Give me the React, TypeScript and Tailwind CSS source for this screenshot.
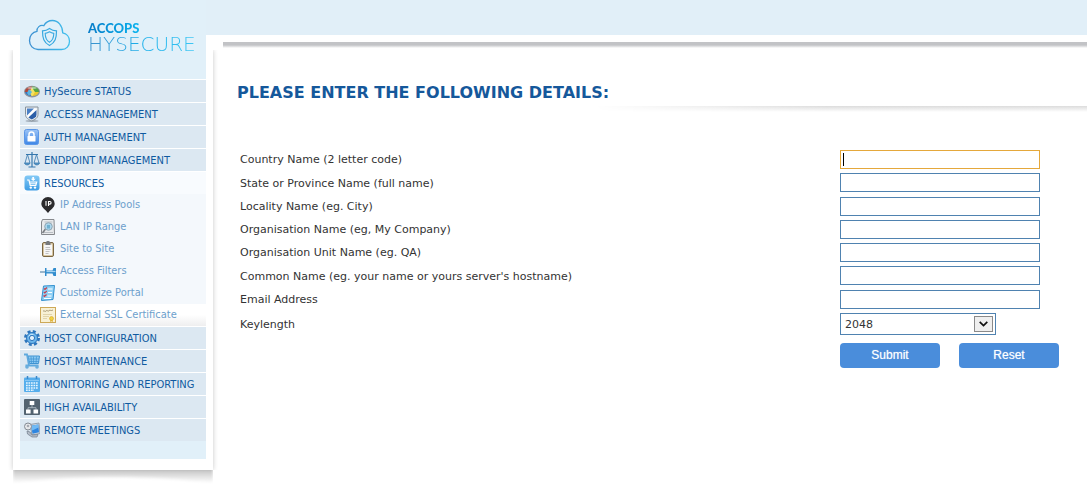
import React from "react";

type NavItem = {
  label: string;
  icon: React.ReactNode;
  children?: NavItem[];
};

type Field = {
  name: string;
  label: string;
};

const iconClass = "w-4 h-4 shrink-0";

const StatusIcon = () => (
  <svg viewBox="0 0 16 16" className={iconClass}>
    <defs>
      <clipPath id="status-oval">
        <ellipse cx="8" cy="8.300" rx="7" ry="4.800" />
      </clipPath>
    </defs>
    <ellipse cx="8" cy="8.600" rx="8" ry="5.900" fill="#8f949c" />
    <g clipPath="url(#status-oval)">
      <path d="M0 0h8v9H0z" fill="#b0483a" />
      <path d="M8 0h8v9H8z" fill="#55a343" />
      <path d="M0 9h8v7H0z" fill="#3577c4" />
      <path d="M8 9h8v7H8z" fill="#ecc92c" />
      <path d="M8 4.500l3 4.500-3 5-3-5z" fill="#f3e163" />
      <path d="M5 6l3 3-3 4-2-3z" fill="#5fb4dd" />
      <ellipse cx="8" cy="4.800" rx="5" ry="1.400" fill="#fff" opacity=".45" />
    </g>
  </svg>
);

const ShieldIcon = () => (
  <svg viewBox="0 0 16 16" className={iconClass}>
    <ellipse cx="8" cy="15" rx="6.500" ry="1" fill="#7e8b96" opacity=".6" />
    <path
      d="M1.500 1h12.500v7.500c0 3.500-3 5-6.200 6.500-3.300-1.500-6.300-3-6.300-6.500z"
      fill="#e8edf1"
      stroke="#87929c"
    />
    <path d="M3 2.500h9.500v6c0 2.500-2.200 3.800-4.700 5C5.300 12.300 3 11 3 8.500z" fill="#fff" />
    <path d="M3 2.500h7L3 9.500z" fill="#4a7fc4" />
    <path d="M12.500 4v4.500c0 2.500-2.200 3.800-4.700 5-1.300-.6-2.500-1.200-3.400-2z" fill="#2c5fa8" />
  </svg>
);

const LockIcon = () => (
  <svg viewBox="0 0 16 16" className={iconClass}>
    <defs>
      <linearGradient id="lock-bg" x1="0" y1="0" x2="0" y2="1">
        <stop offset="0" stopColor="#9cc4f6" />
        <stop offset="1" stopColor="#3d86e6" />
      </linearGradient>
    </defs>
    <rect x=".5" y=".5" width="14" height="15" rx="2" fill="url(#lock-bg)" stroke="#5b97e8" />
    <path d="M5 7V5.500a2.500 2.500 0 0 1 5 0V7" fill="none" stroke="#fff" strokeWidth="1.500" />
    <rect x="3.500" y="7" width="8" height="5.500" rx=".5" fill="#fff" />
  </svg>
);

const ScalesIcon = () => (
  <svg viewBox="0 0 16 16" className={iconClass} fill="none" stroke="#3577ad">
    <path d="M8 0v15M4.500 15h7M2 2.500h12" strokeWidth="1.200" />
    <path d="M3.500 2.500L1 11M3.500 2.500L6 11M12.500 2.500L10 11M12.500 2.500L15 11" strokeWidth=".8" />
    <path d="M.5 11h5.500c-.5 2.500-5 2.500-5.500 0zM10 11h5.500c-.5 2.500-5 2.500-5.500 0z" fill="#5b9bcb" strokeWidth=".8" />
  </svg>
);

const ResourcesIcon = () => (
  <svg viewBox="0 0 16 16" className={iconClass}>
    <defs>
      <linearGradient id="resources-bg" x1="0" y1="0" x2="0" y2="1">
        <stop offset="0" stopColor="#82c9f6" />
        <stop offset="1" stopColor="#3d9ce4" />
      </linearGradient>
    </defs>
    <rect x=".5" y=".5" width="15" height="15" rx="3" fill="url(#resources-bg)" />
    <path d="M3 5h2l1.200 5.500h5.600l.9-3.500H5.500" fill="none" stroke="#fff" strokeWidth="1.200" />
    <path d="M6 8.800h6" stroke="#fff" />
    <path d="M8.300 2h1.800v1.700h1.600L9.200 6 6.700 3.700h1.600z" fill="#fff" />
    <circle cx="6.800" cy="12.600" r="1.200" fill="#fff" />
    <circle cx="11" cy="12.600" r="1.200" fill="#fff" />
  </svg>
);

const PinIcon = () => (
  <svg viewBox="0 0 16 16" className={iconClass}>
    <path d="M8 0a6.700 6.700 0 0 0-6.700 6.700C1.300 10.500 6 13 8 16c2-3 6.700-5.500 6.700-9.300A6.700 6.700 0 0 0 8 0z" fill="#2b2b2d" />
    <path d="M6 4v4.800M8.500 9V4.500h1.300a1.300 1.300 0 0 1 0 2.600H8.500" fill="none" stroke="#fff" strokeWidth="1.100" />
  </svg>
);

const RangeIcon = () => (
  <svg viewBox="0 0 16 16" className={iconClass}>
    <path d="M2.500.5H14l.5 15h-13V3z" fill="#e8eaec" stroke="#86898d" />
    <path d="M4.500 3h8M4 13.500h9" stroke="#b9bec3" />
    <path d="M5.500 10l-3 4" stroke="#777b80" strokeWidth="1.500" />
    <circle cx="8.500" cy="7.500" r="3.800" fill="#abd6ec" stroke="#8fa5b2" />
    <path d="M7 6h3v3.500H7z" fill="#6fb0d0" />
  </svg>
);

const ClipboardIcon = () => (
  <svg viewBox="0 0 16 16" className={iconClass}>
    <rect x="2.500" y="1.500" width="11" height="14" rx="1.500" fill="#d7c6a2" stroke="#7b6744" />
    <path d="M4 3.500h8v10.500H4z" fill="#f6f6f6" />
    <path d="M5.500 1.500L7 0h2l1.500 1.500V4h-5z" fill="#76797c" />
    <path d="M5.500 6.500h4.500M5.500 8.500h5M5.500 10.500h4M5.500 12.500h3" stroke="#b5b5b5" strokeWidth=".8" />
  </svg>
);

const PushPinIcon = () => (
  <svg viewBox="0 0 16 16" className={iconClass}>
    <path d="M0 9h6" stroke="#5e8bab" strokeWidth="1.200" />
    <path d="M5 5h1.500v2.500h6l1-2.500H16v8h-2.500l-1-2.500h-6V13H5z" fill="#328dce" />
    <path d="M6.500 8.500h9" stroke="#a5d5f2" strokeWidth="1.200" />
  </svg>
);

const ChecklistIcon = () => (
  <svg viewBox="0 0 16 16" className={iconClass}>
    <path d="M3.500 1l11-.5-1.500 14-11.500 1z" fill="#8fd0f5" stroke="#318fce" />
    <path d="M8 4h4.500M8 7.500h4M7.500 11h4M4 13.500h7" stroke="#fff" strokeWidth="1.200" />
    <path d="M4 3.500l1 1 2-2M3.800 7l1 1 2-2M3.500 10.500l1 1 2-2" fill="none" stroke="#c34251" strokeWidth="1.200" />
  </svg>
);

const CertificateIcon = () => (
  <svg viewBox="0 0 16 16" className={iconClass}>
    <rect x=".5" y=".5" width="15" height="15" fill="#f8f1d5" stroke="#cda958" />
    <path d="M3 4.500c1-2 2 1 3-.5s2 1 3-.3 2 .7 4-.7" fill="none" stroke="#93825b" strokeWidth=".8" />
    <path d="M3 7.500h9M3 9.500h6M3 11.500h4" stroke="#dbcda0" strokeWidth=".8" />
    <path d="M10.500 12l-.5 3 1.500-.8L13 15l-.5-3z" fill="#dfb23a" />
    <circle cx="11.500" cy="11.500" r="2" fill="#f0d23f" stroke="#d9a52f" strokeWidth=".6" />
  </svg>
);

const GearIcon = () => (
  <svg viewBox="0 0 16 16" className={iconClass}>
    <circle cx="8" cy="8" r="6.500" fill="none" stroke="#2d76bd" strokeWidth="3" strokeDasharray="2.900 2.200" />
    <circle cx="8" cy="8" r="5.500" fill="#6bb5ea" stroke="#2d76bd" />
    <circle cx="8" cy="8" r="2.600" fill="#e3f0fa" stroke="#2d76bd" />
    <path d="M4.500 6.500a4 4 0 0 1 5-2" fill="none" stroke="#c6e5fa" />
  </svg>
);

const CartIcon = () => (
  <svg viewBox="0 0 16 16" className={iconClass}>
    <path d="M4 3h11.500l-1 7.500h-9z" fill="#8bc9f2" stroke="#3f93d2" />
    <path d="M7 3.500l.5 7M9.500 3.500v7M12.500 3.500l-.5 7M5 6h10M5 8.500h10" stroke="#3f93d2" strokeWidth=".7" />
    <path d="M0 1.500h3l2 11h-3.500M5 12.500h9.500" fill="none" stroke="#5ea9de" strokeWidth="1.800" />
    <circle cx="3" cy="14" r="1.800" fill="#6caedd" />
    <circle cx="13" cy="14" r="1.800" fill="#6caedd" />
  </svg>
);

const CalendarIcon = () => (
  <svg viewBox="0 0 16 16" className={iconClass}>
    <rect x="0" y="1.500" width="16" height="14.500" rx="1" fill="#56aeec" />
    <path d="M3.500 0v3M12.500 0v3" stroke="#3988cb" strokeWidth="1.500" />
    <path d="M1 4.500h14" stroke="#86c6f4" />
    <path d="M2 7h12.500M2 9.500h12.500M2 12h12.500M2 14.200h8" stroke="#e8f6ff" strokeWidth="1.500" strokeDasharray="1.700 .8" />
  </svg>
);

const ClusterIcon = () => (
  <svg viewBox="0 0 16 16" className={iconClass}>
    <rect width="16" height="16" rx="1" fill="#536370" />
    <path d="M8 6v3M4 11V8.700h8V11" fill="none" stroke="#a3b0b9" />
    <path d="M5.700 2h4.600v4H5.700zM2 10.500h4.600v4H2zM9.500 10.500h4.600v4H9.500z" fill="#fff" />
  </svg>
);

const MeetingIcon = () => (
  <svg viewBox="0 0 16 16" className={iconClass}>
    <path d="M6 2.500l9-1.500 1 10.500-8 1.500z" fill="#cfd7df" stroke="#8190a1" strokeWidth=".8" />
    <path d="M7 3.800l7.300-1.400.7 7.800-6.500 1.500z" fill="#2f86e0" />
    <path d="M7 3.800l7.300-1.400.2 3-6.300 3z" fill="#71baf4" />
    <circle cx="4" cy="4.500" r="3.500" fill="#e6e8eb" stroke="#838a94" />
    <circle cx="4" cy="4" r="1.300" fill="#a5a9b2" />
    <path d="M3 9l3 1 2 3 6-.5-1 2.500H8L3.500 12z" fill="#b5bdc8" stroke="#717c8c" strokeWidth=".7" />
  </svg>
);

const navItems: NavItem[] = [
  { label: "HySecure STATUS", icon: <StatusIcon /> },
  { label: "ACCESS MANAGEMENT", icon: <ShieldIcon /> },
  { label: "AUTH MANAGEMENT", icon: <LockIcon /> },
  { label: "ENDPOINT MANAGEMENT", icon: <ScalesIcon /> },
  {
    label: "RESOURCES",
    icon: <ResourcesIcon />,
    children: [
      { label: "IP Address Pools", icon: <PinIcon /> },
      { label: "LAN IP Range", icon: <RangeIcon /> },
      { label: "Site to Site", icon: <ClipboardIcon /> },
      { label: "Access Filters", icon: <PushPinIcon /> },
      { label: "Customize Portal", icon: <ChecklistIcon /> },
      { label: "External SSL Certificate", icon: <CertificateIcon /> },
    ],
  },
  { label: "HOST CONFIGURATION", icon: <GearIcon /> },
  { label: "HOST MAINTENANCE", icon: <CartIcon /> },
  { label: "MONITORING AND REPORTING", icon: <CalendarIcon /> },
  { label: "HIGH AVAILABILITY", icon: <ClusterIcon /> },
  { label: "REMOTE MEETINGS", icon: <MeetingIcon /> },
];

const fields: Field[] = [
  { name: "country", label: "Country Name (2 letter code)" },
  { name: "state", label: "State or Province Name (full name)" },
  { name: "locality", label: "Locality Name (eg. City)" },
  { name: "organisation", label: "Organisation Name (eg, My Company)" },
  { name: "unit", label: "Organisation Unit Name (eg. QA)" },
  { name: "commonName", label: "Common Name (eg. your name or yours server's hostname)" },
  { name: "email", label: "Email Address" },
];

const rowClass = "grid grid-cols-[600fr_247fr] items-center";

function Logo() {
  return (
    <div className="flex h-[79px] items-start bg-[#e1f0f9] pl-2 pt-[19px]">
      <svg viewBox="0 0 44 34" className="h-[34px] w-11 shrink-0" fill="none">
        <defs>
          <linearGradient id="cloud" x1="0" y1="0" x2="1" y2="0">
            <stop offset="0" stopColor="#3c8fd0" />
            <stop offset="1" stopColor="#3fc0ee" />
          </linearGradient>
        </defs>
        <path
          d="M10 30.500h23.500c5 0 8-3.700 8-8.300 0-4.500-3-7.700-6.800-8.400C34.500 6.500 30 1.500 24.500 1.500c-4 0-7 2-8.700 5.200-3.800-1.200-7.200 1.800-6.800 5.600C4.500 13 1.500 16.800 1.500 21.500c0 5 3.500 9 8.500 9z"
          stroke="url(#cloud)"
          strokeWidth="1.300"
        />
        <path d="M21.500 9.500c2 1.500 4.300 2.300 7 2.400 0 7-1.200 11.600-7 14.600-5.800-3-7-7.600-7-14.600 2.700-.1 5-.9 7-2.400z" stroke="#38a9e0" strokeWidth="1.200" />
        <path d="M21.500 12.800c1.400.9 2.800 1.400 4.300 1.600-.1 4.400-1.100 7-4.300 8.900-3.200-1.900-4.200-4.500-4.300-8.900 1.500-.2 2.900-.7 4.300-1.600z" stroke="#38a9e0" strokeWidth="1.100" />
      </svg>
      <div className="flex flex-col items-start pl-4 pt-0.5">
        <span className="bg-gradient-to-r from-[#087cc8] to-[#0bb3ee] bg-clip-text font-['Lato'] text-[13px] font-black leading-[14px] text-transparent">
          ACCOPS
        </span>
        <span className="bg-gradient-to-r from-[#3a92cd] via-[#16aeea] to-[#3fc8f4] bg-clip-text font-['DejaVu_Sans_Light','DejaVu_Sans',sans-serif] text-[20px] font-extralight leading-[18px] text-transparent">
          HYSECURE
        </span>
      </div>
    </div>
  );
}

function Sidebar() {
  return (
    <aside className="relative ml-[13px] w-[200px] shrink-0 font-['DejaVu_Sans_Condensed','DejaVu_Sans',sans-serif] text-[11px]">
      {/* paper frame behind the menu, shadow on its sides only */}
      <div className="absolute inset-x-0 bottom-4 top-[50px] bg-white shadow-[0_0_5px_rgba(0,0,0,0.22)] [clip-path:inset(0_-6px)]" />
      <div className="relative px-[7px]">
        <Logo />
        <nav className="bg-[#e1f0f9] pb-[18px]">
          <ul>
            {navItems.map((item) => (
              <li key={item.label}>
                <a
                  href="#"
                  className={`flex h-[23px] items-center gap-1 border-t border-white pl-1 text-[#0f5aa0] ${
                    item.children ? "bg-[#f8fbfe]" : "bg-[#dce8f2]"
                  }`}
                >
                  {item.icon}
                  <span className="whitespace-nowrap pt-0.5">{item.label}</span>
                </a>
                {item.children && (
                  <ul className="bg-[#f4f8fc]">
                    {item.children.map((child) => (
                      <li key={child.label} className="last:bg-gradient-to-b last:from-white last:from-50% last:to-[#eeeeef]">
                        <a href="#" className="flex h-[22px] items-center gap-1 pb-px pl-5 text-[#6d9fcc]">
                          {child.icon}
                          <span className="whitespace-nowrap pt-0.5">{child.label}</span>
                        </a>
                      </li>
                    ))}
                  </ul>
                )}
              </li>
            ))}
          </ul>
        </nav>
        <div className="h-[11px]" />
      </div>
      <svg viewBox="0 0 200 16" preserveAspectRatio="none" className="relative block h-4 w-full">
        <defs>
          <linearGradient id="curl" x1="0" y1="0" x2="0" y2="1">
            <stop offset="0" stopColor="#989898" />
            <stop offset=".4" stopColor="#cfcfcf" />
            <stop offset="1" stopColor="#fff" />
          </linearGradient>
          <filter id="curl-blur" x="-5%" y="-50%" width="110%" height="200%">
            <feGaussianBlur stdDeviation="1.500" />
          </filter>
        </defs>
        <path d="M0-5h200v18C170 9 135 7 100 7S30 9 0 13z" fill="url(#curl)" filter="url(#curl-blur)" />
      </svg>
    </aside>
  );
}

function CertificateForm() {
  return (
    <form className="pl-[17px] pt-[38px] text-[11px] text-[#333]" onSubmit={(e) => e.preventDefault()}>
      <div className="flex h-[185px] flex-col justify-between">
        {fields.map((field, index) => (
          <div key={field.name} className={rowClass}>
            <label htmlFor={field.name} className="pt-0.5">
              {field.label}
            </label>
            <input
              id={field.name}
              name={field.name}
              type="text"
              autoFocus={index === 0}
              className="h-[19px] w-[200px] border border-[#4f82b0] bg-white px-[3px] caret-transparent outline-none focus:border-[#e5a83b] focus:bg-[linear-gradient(#000,#000)] focus:bg-[length:1px_13px] focus:bg-[position:2px_2px] focus:bg-no-repeat"
            />
          </div>
        ))}
        <div className={rowClass}>
          <label htmlFor="keylength" className="pt-0.5">
            Keylength
          </label>
          <div className="relative w-[156px]">
            <select
              id="keylength"
              name="keylength"
              defaultValue="2048"
              className="block h-[22px] w-full appearance-none border border-[#4f82b0] bg-white px-1 pt-0.5 outline-none"
            >
              <option>1024</option>
              <option>2048</option>
              <option>4096</option>
            </select>
            <span className="pointer-events-none absolute right-[3px] top-[3px] flex h-4 w-[19px] items-center justify-center border border-[#8a8a8a] bg-[#efefef]">
              <svg viewBox="0 0 9 6" className="h-1.5 w-[9px]" fill="none" stroke="#111" strokeWidth="1.700">
                <path d="M.7.800l3.800 3.700L8.300.800" />
              </svg>
            </span>
          </div>
        </div>
      </div>
      <div className={`${rowClass} pt-2`}>
        <div className="col-start-2 flex gap-[19px] font-['Liberation_Sans',Arial,sans-serif] text-xs text-white">
          <button
            type="submit"
            className="h-[25px] w-[100px] shrink-0 rounded bg-[#4a8ddb] pb-px [text-shadow:0_0_1px_rgba(255,255,255,0.6)]"
          >
            Submit
          </button>
          <button
            type="reset"
            className="h-[25px] w-[100px] shrink-0 rounded bg-[#4a8ddb] pb-px [text-shadow:0_0_1px_rgba(255,255,255,0.6)]"
          >
            Reset
          </button>
        </div>
      </div>
    </form>
  );
}

export default function App() {
  return (
    <div className="flex min-h-screen items-start bg-white bg-[linear-gradient(#e1eff8,#e1eff8)] bg-[length:100%_35px] bg-no-repeat font-['DejaVu_Sans',sans-serif]">
      <Sidebar />
      <main className="ml-[10px] min-w-0 flex-1 pt-[42px]">
        <div className="h-1.5 bg-gradient-to-b from-[#c2c3c6] from-50% to-white" />
        <h1 className="pl-[14px] pt-[33px] text-[16px] font-bold leading-6 text-[#15589b]">
          PLEASE ENTER THE FOLLOWING DETAILS:
        </h1>
        <div className="mt-px h-1.5 bg-gradient-to-b from-[#dcdcdc] to-white [mask-image:linear-gradient(to_right,transparent_43%,black_70%)]" />
        <CertificateForm />
      </main>
    </div>
  );
}
